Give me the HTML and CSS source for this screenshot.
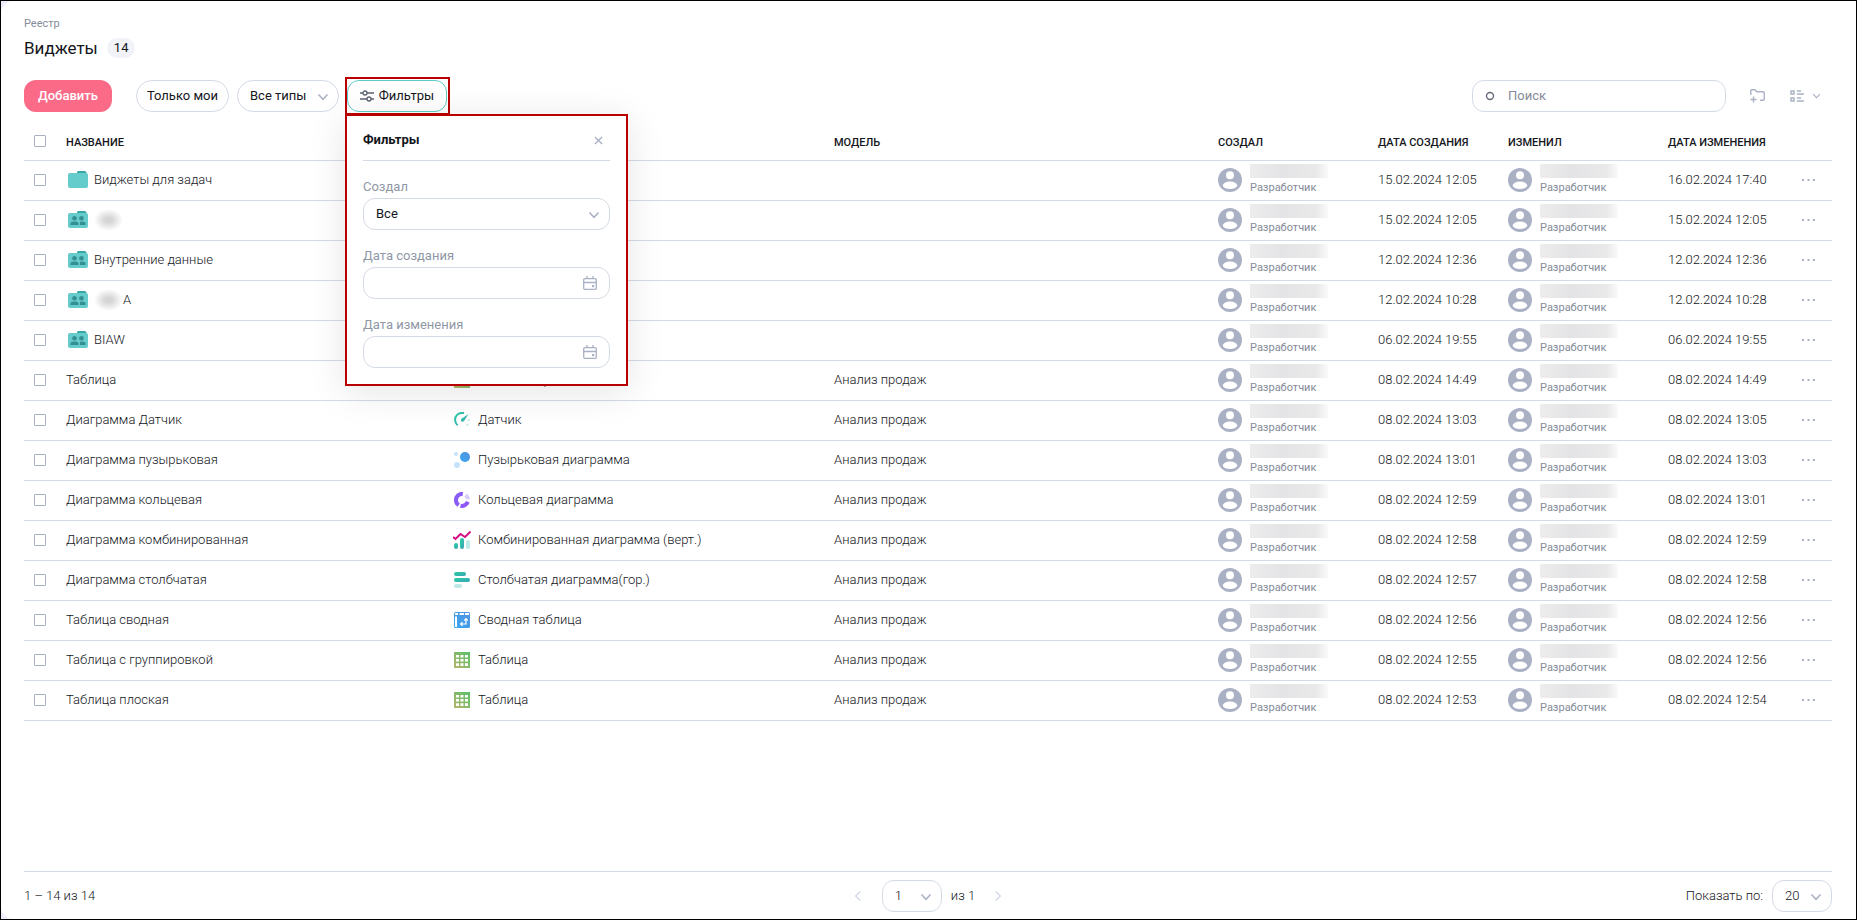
FILE: index.html
```html
<!DOCTYPE html>
<html lang="ru">
<head>
<meta charset="utf-8">
<title>Виджеты</title>
<link rel="stylesheet" href="styles.css">
</head>
<body>
<svg class="sprite" aria-hidden="true">
  <defs>
    <linearGradient id="g-teal" x1="0" y1="0" x2="1" y2="1"><stop offset="0" stop-color="#2ccfa3"/><stop offset="1" stop-color="#3aa3b8"/></linearGradient>
    <linearGradient id="g-blue" x1="0" y1="1" x2="1" y2="0"><stop offset="0" stop-color="#38a8f0"/><stop offset="1" stop-color="#5590e0"/></linearGradient>
    <linearGradient id="g-green" x1="0" y1="1" x2="1" y2="0"><stop offset="0" stop-color="#b9b36c"/><stop offset="1" stop-color="#55c268"/></linearGradient>
  </defs>
  <symbol id="chevron" viewBox="0 0 12 8"><path d="M1.500 1.500 6 6.300l4.500-4.800" fill="none" stroke="currentColor" stroke-width="1.500"/></symbol>
  <symbol id="folder" viewBox="0 0 20 18"><path d="M10 0h6.500a2 2 0 0 1 2 2v2H9V1z" fill="#3aa5a5"/><rect y="2" width="20" height="15" rx="2" fill="#65cccb"/></symbol>
  <symbol id="shared" viewBox="0 0 20 18"><path d="M10 0h6.500a2 2 0 0 1 2 2v2H9V1z" fill="#3aa5a5"/><rect y="2" width="20" height="15" rx="2" fill="#65cccb"/><g fill="#358f92"><circle cx="6.500" cy="7.200" r="2.300"/><circle cx="13.500" cy="7.200" r="2.300"/><path d="M2.500 14v-1.500q0-2 4-2t4 2V14zM12 14v-3.300q5.500-.7 5.500 1.800V14z"/></g></symbol>
  <symbol id="avatar" viewBox="0 0 24 24"><circle cx="12" cy="12" r="12" fill="#abb1c5"/><circle cx="12" cy="7.200" r="4" fill="#fff"/><ellipse cx="12" cy="17.300" rx="7.200" ry="3.700" fill="#fff"/></symbol>
  <symbol id="dots" viewBox="0 0 14 4"><path d="M0 1h2v2H0zM5.500 1h2v2h-2zM11 1h2v2h-2z" fill="currentColor"/></symbol>
  <symbol id="grid" viewBox="0 0 16 16"><path d="M0 0h16v16H0z" fill="url(#g-green)"/><path d="M2 3h3v2.500H2zm4.500 0h3v2.500h-3zM11 3h3v2.500h-3zM2 7h3v2.500H2zm4.500 0h3v2.500h-3zM11 7h3v2.500h-3zM2 11.200h3v2.800H2zm4.500 0h3v2.800h-3zm4.500 0h3v2.800h-3z" fill="#fff"/></symbol>
  <symbol id="gauge" viewBox="0 0 16 16"><path d="M10 1.100C4 0 .9 4 1.100 8c.1 2.300 1 4 2.500 5.200" fill="none" stroke="url(#g-teal)" stroke-width="2"/><path d="M14.500 2 10 9a1.700 1.700 0 0 1-2.800-2z" fill="url(#g-teal)"/><circle cx="15" cy="8" r="1" fill="#bfe9e6"/><circle cx="13.300" cy="13" r="1" fill="#bfe9e6"/></symbol>
  <symbol id="bubble" viewBox="0 0 16 16"><circle cx="11" cy="5" r="5" fill="url(#g-blue)"/><circle cx="2" cy="2" r="2" fill="#c5e2fb"/><circle cx="3" cy="13" r="3" fill="#c5e2fb"/></symbol>
  <symbol id="donut" viewBox="0 0 16 16"><g fill="none" stroke-width="4"><path d="M8.800 2C5 1.400 1.800 4.500 2 8.600c.1 1.900 1.200 3.500 2.700 4.500" stroke="#8a5cf6"/><path d="M6.500 13.800c2.900.7 6-.6 7.300-4" stroke="#9158f8"/><path d="M11.500 3.200a6 6 0 0 1 2.500 4" stroke="#d9cdfb"/></g></symbol>
  <symbol id="combo" viewBox="0 0 18 18"><path d="m0 6 2.500 2L7.500 3l4.500 3 5.500-5.500" fill="none" stroke="#d40e83" stroke-width="2"/><rect x="1" y="12" width="4" height="6" rx="2" fill="url(#g-teal)"/><rect x="7" y="7" width="4" height="11" rx="2" fill="url(#g-teal)"/><rect x="13" y="9" width="4" height="9" rx="2" fill="#bfe9e6"/></symbol>
  <symbol id="bars" viewBox="0 0 16 16"><rect width="12" height="4" rx="2" fill="url(#g-teal)"/><rect y="6" width="16" height="4" rx="2" fill="url(#g-teal)"/><rect y="12" width="8" height="4" rx="2" fill="#bfe9e6"/></symbol>
  <symbol id="pivot" viewBox="0 0 16 16"><rect width="16" height="16" rx="1.500" fill="url(#g-blue)"/><path d="M1 1h3v2H1zm4.500 0H10v2H5.500zM11 1h4v2h-4zM1 4.500h2V15H1z" fill="#fff"/><path d="M12 12V7m-1.700 1.500L12 6.600l1.700 1.900M12.600 12H7m1.500-1.700L6.600 12l1.900 1.700" fill="none" stroke="#fff" stroke-width="1.200"/></symbol>
  <symbol id="calendar" viewBox="0 0 14 14"><path d="M.7 3.700a1 1 0 0 1 1-1h10.600a1 1 0 0 1 1 1v8.600a1 1 0 0 1-1 1H1.700a1 1 0 0 1-1-1zM.7 6.500h12.600M4 0v2.500M10 0v2.500" fill="none" stroke="currentColor" stroke-width="1.300"/><path d="M9 9h2.200v2.200H9z" fill="currentColor"/></symbol>
</svg>
<main class="page">
  <header class="head">
    <a class="crumb" href="#">Реестр</a>
    <div class="title-row"><h1>Виджеты</h1><span class="count">14</span></div>
  </header>

  <div class="toolbar">
    <button class="btn btn-add">Добавить</button>
    <button class="btn">Только мои</button>
    <div class="select types">
      <select aria-label="Тип"><option>Все типы</option></select>
      <svg class="chev"><use href="#chevron"/></svg>
    </div>
    <div class="filter">
      <button class="btn btn-filter" aria-expanded="true">
        <svg class="sliders" viewBox="0 0 14 12"><g fill="none" stroke="#5b6270" stroke-width="1.300"><path d="M0 3h3M7 3h7M0 9h7M11 9h3"/><circle cx="5" cy="3" r="2"/><circle cx="9" cy="9" r="2"/></g></svg>
        Фильтры
      </button>
      <section class="panel" aria-label="Фильтры">
        <div class="panel-head">
          <h2>Фильтры</h2>
          <button class="close" aria-label="Закрыть"><svg viewBox="0 0 10 10"><path d="m1 1 8 8M9 1 1 9" fill="none" stroke="currentColor" stroke-width="1.500"/></svg></button>
        </div>
        <label for="author">Создал</label>
        <div class="select">
          <select id="author"><option>Все</option></select>
          <svg class="chev"><use href="#chevron"/></svg>
        </div>
        <label for="created">Дата создания</label>
        <div class="date"><input id="created" type="text"><svg><use href="#calendar"/></svg></div>
        <label for="changed">Дата изменения</label>
        <div class="date"><input id="changed" type="text"><svg><use href="#calendar"/></svg></div>
      </section>
    </div>
    <div class="tools">
      <div class="search">
        <svg viewBox="0 0 10 10"><circle cx="5" cy="5" r="3.500" fill="none" stroke="#656c79" stroke-width="1.400"/></svg>
        <input type="search" placeholder="Поиск" aria-label="Поиск">
      </div>
      <button class="icon-btn" aria-label="Новая папка"><svg class="newfolder" viewBox="0 0 15 14"><path d="M.8 6V1.700a1 1 0 0 1 1-1H5l1.700 2h6.500a1 1 0 0 1 1 1v6.600a1 1 0 0 1-1 1H10M3.500 7.500v6M.5 10.500h6" fill="none" stroke="currentColor" stroke-width="1.400"/></svg></button>
      <button class="icon-btn view" aria-label="Вид"><svg class="list" viewBox="0 0 15 12"><g fill="none" stroke="currentColor" stroke-width="1.400"><path d="M1 1h3v3H1zM1 8h3v3H1zM7 1h4M7 4h7M7 8h4M7 11h7"/></g></svg><svg class="chev-sm"><use href="#chevron"/></svg></button>
    </div>
  </div>

  <table class="grid">
    <colgroup><col class="c-check"><col><col><col><col class="c-user"><col class="c-date"><col class="c-user"><col class="c-date"><col class="c-more"></colgroup>
    <thead>
      <tr><th class="all"><input type="checkbox" aria-label="Выбрать все"></th><th>Название</th><th></th><th>Модель</th><th>Создал</th><th>Дата создания</th><th>Изменил</th><th>Дата изменения</th><th></th></tr>
    </thead>
    <tbody>
      <tr><td><input type="checkbox" aria-label="Виджеты для задач"></td><td><div class="name"><svg class="folder"><use href="#folder"/></svg>Виджеты для задач</div></td><td></td><td></td><td><div class="user"><svg><use href="#avatar"/></svg><div><i class="mask"></i><small>Разработчик</small></div></div></td><td class="dt">15.02.2024 12:05</td><td><div class="user"><svg><use href="#avatar"/></svg><div><i class="mask"></i><small>Разработчик</small></div></div></td><td class="dt">16.02.2024 17:40</td><td><button class="more" aria-label="Действия"><svg><use href="#dots"/></svg></button></td></tr>
      <tr><td><input type="checkbox" aria-label="Папка"></td><td><div class="name"><svg class="folder"><use href="#shared"/></svg><i class="smudge"></i></div></td><td></td><td></td><td><div class="user"><svg><use href="#avatar"/></svg><div><i class="mask"></i><small>Разработчик</small></div></div></td><td class="dt">15.02.2024 12:05</td><td><div class="user"><svg><use href="#avatar"/></svg><div><i class="mask"></i><small>Разработчик</small></div></div></td><td class="dt">15.02.2024 12:05</td><td><button class="more" aria-label="Действия"><svg><use href="#dots"/></svg></button></td></tr>
      <tr><td><input type="checkbox" aria-label="Внутренние данные"></td><td><div class="name"><svg class="folder"><use href="#shared"/></svg>Внутренние данные</div></td><td></td><td></td><td><div class="user"><svg><use href="#avatar"/></svg><div><i class="mask"></i><small>Разработчик</small></div></div></td><td class="dt">12.02.2024 12:36</td><td><div class="user"><svg><use href="#avatar"/></svg><div><i class="mask"></i><small>Разработчик</small></div></div></td><td class="dt">12.02.2024 12:36</td><td><button class="more" aria-label="Действия"><svg><use href="#dots"/></svg></button></td></tr>
      <tr><td><input type="checkbox" aria-label="Папка А"></td><td><div class="name"><svg class="folder"><use href="#shared"/></svg><span class="masked"><i class="smudge"></i>А</span></div></td><td></td><td></td><td><div class="user"><svg><use href="#avatar"/></svg><div><i class="mask"></i><small>Разработчик</small></div></div></td><td class="dt">12.02.2024 10:28</td><td><div class="user"><svg><use href="#avatar"/></svg><div><i class="mask"></i><small>Разработчик</small></div></div></td><td class="dt">12.02.2024 10:28</td><td><button class="more" aria-label="Действия"><svg><use href="#dots"/></svg></button></td></tr>
      <tr><td><input type="checkbox" aria-label="BIAW"></td><td><div class="name"><svg class="folder"><use href="#shared"/></svg>BIAW</div></td><td></td><td></td><td><div class="user"><svg><use href="#avatar"/></svg><div><i class="mask"></i><small>Разработчик</small></div></div></td><td class="dt">06.02.2024 19:55</td><td><div class="user"><svg><use href="#avatar"/></svg><div><i class="mask"></i><small>Разработчик</small></div></div></td><td class="dt">06.02.2024 19:55</td><td><button class="more" aria-label="Действия"><svg><use href="#dots"/></svg></button></td></tr>
      <tr><td><input type="checkbox" aria-label="Таблица"></td><td>Таблица</td><td><div class="type"><svg><use href="#grid"/></svg>Таблица сгр.</div></td><td>Анализ продаж</td><td><div class="user"><svg><use href="#avatar"/></svg><div><i class="mask"></i><small>Разработчик</small></div></div></td><td class="dt">08.02.2024 14:49</td><td><div class="user"><svg><use href="#avatar"/></svg><div><i class="mask"></i><small>Разработчик</small></div></div></td><td class="dt">08.02.2024 14:49</td><td><button class="more" aria-label="Действия"><svg><use href="#dots"/></svg></button></td></tr>
      <tr><td><input type="checkbox" aria-label="Диаграмма Датчик"></td><td>Диаграмма Датчик</td><td><div class="type"><svg><use href="#gauge"/></svg>Датчик</div></td><td>Анализ продаж</td><td><div class="user"><svg><use href="#avatar"/></svg><div><i class="mask"></i><small>Разработчик</small></div></div></td><td class="dt">08.02.2024 13:03</td><td><div class="user"><svg><use href="#avatar"/></svg><div><i class="mask"></i><small>Разработчик</small></div></div></td><td class="dt">08.02.2024 13:05</td><td><button class="more" aria-label="Действия"><svg><use href="#dots"/></svg></button></td></tr>
      <tr><td><input type="checkbox" aria-label="Диаграмма пузырьковая"></td><td>Диаграмма пузырьковая</td><td><div class="type"><svg><use href="#bubble"/></svg>Пузырьковая диаграмма</div></td><td>Анализ продаж</td><td><div class="user"><svg><use href="#avatar"/></svg><div><i class="mask"></i><small>Разработчик</small></div></div></td><td class="dt">08.02.2024 13:01</td><td><div class="user"><svg><use href="#avatar"/></svg><div><i class="mask"></i><small>Разработчик</small></div></div></td><td class="dt">08.02.2024 13:03</td><td><button class="more" aria-label="Действия"><svg><use href="#dots"/></svg></button></td></tr>
      <tr><td><input type="checkbox" aria-label="Диаграмма кольцевая"></td><td>Диаграмма кольцевая</td><td><div class="type"><svg><use href="#donut"/></svg>Кольцевая диаграмма</div></td><td>Анализ продаж</td><td><div class="user"><svg><use href="#avatar"/></svg><div><i class="mask"></i><small>Разработчик</small></div></div></td><td class="dt">08.02.2024 12:59</td><td><div class="user"><svg><use href="#avatar"/></svg><div><i class="mask"></i><small>Разработчик</small></div></div></td><td class="dt">08.02.2024 13:01</td><td><button class="more" aria-label="Действия"><svg><use href="#dots"/></svg></button></td></tr>
      <tr><td><input type="checkbox" aria-label="Диаграмма комбинированная"></td><td>Диаграмма комбинированная</td><td><div class="type"><svg class="wide"><use href="#combo"/></svg>Комбинированная диаграмма (верт.)</div></td><td>Анализ продаж</td><td><div class="user"><svg><use href="#avatar"/></svg><div><i class="mask"></i><small>Разработчик</small></div></div></td><td class="dt">08.02.2024 12:58</td><td><div class="user"><svg><use href="#avatar"/></svg><div><i class="mask"></i><small>Разработчик</small></div></div></td><td class="dt">08.02.2024 12:59</td><td><button class="more" aria-label="Действия"><svg><use href="#dots"/></svg></button></td></tr>
      <tr><td><input type="checkbox" aria-label="Диаграмма столбчатая"></td><td>Диаграмма столбчатая</td><td><div class="type"><svg><use href="#bars"/></svg>Столбчатая диаграмма(гор.)</div></td><td>Анализ продаж</td><td><div class="user"><svg><use href="#avatar"/></svg><div><i class="mask"></i><small>Разработчик</small></div></div></td><td class="dt">08.02.2024 12:57</td><td><div class="user"><svg><use href="#avatar"/></svg><div><i class="mask"></i><small>Разработчик</small></div></div></td><td class="dt">08.02.2024 12:58</td><td><button class="more" aria-label="Действия"><svg><use href="#dots"/></svg></button></td></tr>
      <tr><td><input type="checkbox" aria-label="Таблица сводная"></td><td>Таблица сводная</td><td><div class="type"><svg><use href="#pivot"/></svg>Сводная таблица</div></td><td>Анализ продаж</td><td><div class="user"><svg><use href="#avatar"/></svg><div><i class="mask"></i><small>Разработчик</small></div></div></td><td class="dt">08.02.2024 12:56</td><td><div class="user"><svg><use href="#avatar"/></svg><div><i class="mask"></i><small>Разработчик</small></div></div></td><td class="dt">08.02.2024 12:56</td><td><button class="more" aria-label="Действия"><svg><use href="#dots"/></svg></button></td></tr>
      <tr><td><input type="checkbox" aria-label="Таблица с группировкой"></td><td>Таблица с группировкой</td><td><div class="type"><svg><use href="#grid"/></svg>Таблица</div></td><td>Анализ продаж</td><td><div class="user"><svg><use href="#avatar"/></svg><div><i class="mask"></i><small>Разработчик</small></div></div></td><td class="dt">08.02.2024 12:55</td><td><div class="user"><svg><use href="#avatar"/></svg><div><i class="mask"></i><small>Разработчик</small></div></div></td><td class="dt">08.02.2024 12:56</td><td><button class="more" aria-label="Действия"><svg><use href="#dots"/></svg></button></td></tr>
      <tr><td><input type="checkbox" aria-label="Таблица плоская"></td><td>Таблица плоская</td><td><div class="type"><svg><use href="#grid"/></svg>Таблица</div></td><td>Анализ продаж</td><td><div class="user"><svg><use href="#avatar"/></svg><div><i class="mask"></i><small>Разработчик</small></div></div></td><td class="dt">08.02.2024 12:53</td><td><div class="user"><svg><use href="#avatar"/></svg><div><i class="mask"></i><small>Разработчик</small></div></div></td><td class="dt">08.02.2024 12:54</td><td><button class="more" aria-label="Действия"><svg><use href="#dots"/></svg></button></td></tr>
    </tbody>
  </table>

  <footer class="foot">
    <span>1 – 14 из 14</span>
    <nav class="pager" aria-label="Страницы">
      <button class="arrow prev" aria-label="Назад"><svg><use href="#chevron"/></svg></button>
      <div class="select small"><select id="pageno" aria-label="Страница"><option>1</option></select><svg class="chev"><use href="#chevron"/></svg></div>
      <span>из 1</span>
      <button class="arrow next" aria-label="Вперёд"><svg><use href="#chevron"/></svg></button>
    </nav>
    <div class="per-page"><label for="size">Показать по:</label><div class="select small"><select id="size"><option>20</option></select><svg class="chev"><use href="#chevron"/></svg></div></div>
  </footer>
</main>
</body>
</html>
```
FILE: styles.css
```css
* { box-sizing: border-box; }

body {
  margin: 0;
  min-height: 100vh;
  display: flex;
  border: 1px solid #000;
  background: #efeaf8;
  font: 300 13px/16px Roboto, "Liberation Sans", sans-serif;
  color: #14161c;
}

button, input, select { font: inherit; color: inherit; margin: 0; }
button { cursor: pointer; }
svg { display: block; flex: none; }
.sprite { position: absolute; width: 0; height: 0; }

.page {
  flex: 1;
  min-width: 0;
  display: flex;
  flex-direction: column;
  padding: 0 24px 0 23px;
  background: #fff;
  border-radius: 12px 0 0 12px;
}

.head { padding-top: 15px; font-weight: 400; }
.crumb { display: block; font-size: 11px; line-height: 16px; color: #858b99; text-decoration: none; }
.title-row { display: flex; align-items: center; gap: 9px; height: 20px; margin-top: 6px; }
h1 { margin: 0; font-size: 17px; line-height: 20px; font-weight: 400; }
.count { padding: 2px 7px; border-radius: 10px; background: #f1f3f8; font-size: 13px; }

.toolbar { display: flex; align-items: center; gap: 8px; margin-top: 22px; font-weight: 400; }
.btn { height: 32px; padding: 0 10px; border: 1px solid #d5dbe5; border-radius: 16px; background: #fff; white-space: nowrap; }
.btn-add { margin-right: 16px; padding: 0 14px; border: 0; border-radius: 12px; background: #fb6b88; color: #fff; font-weight: 500; }
.select { position: relative; }
.select select { appearance: none; display: block; width: 100%; height: 32px; padding: 0 30px 0 12px; border: 1px solid #d5dbe5; border-radius: 12px; background: #fff; }
.chev { position: absolute; right: 10px; top: 13px; width: 12px; height: 8px; color: #abb1c5; pointer-events: none; }
.types { width: 102px; }
.types select { border-radius: 16px; }

.filter { position: relative; }
.filter::after { content: ""; position: absolute; inset: -3px -3px -3px -2px; border: 2px solid #b90000; pointer-events: none; }
.btn-filter { display: flex; align-items: center; justify-content: center; gap: 5px; width: 100px; border-color: #63c9c8; border-radius: 12px; }
.sliders { width: 14px; height: 12px; }

.panel {
  position: absolute;
  z-index: 2;
  top: 34px;
  left: -2px;
  width: 283px;
  padding: 16px;
  border: 2px solid #b90000;
  background: #fff;
  box-shadow: 0 6px 36px rgba(0, 0, 0, .11);
}
.panel-head { display: flex; align-items: center; justify-content: space-between; height: 29px; padding-bottom: 12px; border-bottom: 1px solid #d5dbe5; }
h2 { margin: 0; font-size: 13px; line-height: 16px; font-weight: 700; }
.close { padding: 4px 7px; border: 0; background: none; color: #abb1c5; }
.close svg { width: 9px; height: 9px; }
.panel label { display: block; margin: 18px 0 3px; color: #8f97a6; }
.date { position: relative; }
.date input { display: block; width: 100%; height: 32px; padding: 0 36px 0 12px; border: 1px solid #d5dbe5; border-radius: 12px; background: #fff; }
.date svg { position: absolute; right: 13px; top: 9px; width: 14px; height: 14px; color: #abb1c5; }

.tools { display: flex; align-items: center; margin-left: auto; }
.search { display: flex; align-items: center; gap: 13px; width: 254px; height: 32px; margin-right: 24px; padding: 0 12px; border: 1px solid #d5dbe5; border-radius: 12px; }
.search svg { width: 10px; height: 10px; }
.search input { flex: 1; min-width: 0; padding: 0; border: 0; outline: 0; background: none; }
.search input::placeholder { color: #858b99; opacity: 1; }
.icon-btn { display: flex; align-items: center; gap: 7px; padding: 0; border: 0; background: none; color: #abb1c5; }
.newfolder { width: 15px; height: 14px; }
.view { margin: 0 11px 0 25px; }
.list { width: 15px; height: 12px; }
.chev-sm { width: 9px; height: 6px; }

.grid { width: 100%; margin-top: 10px; table-layout: fixed; border-collapse: collapse; }
.c-check { width: 42px; }
.c-user { width: 160px; }
.c-date { width: 130px; }
.c-more { width: 34px; }
th, td { height: 40px; padding: 0; border-bottom: 1px solid #d5dbe5; text-align: left; white-space: nowrap; }
th { height: 38px; padding-top: 4px; font-size: 11px; line-height: 16px; font-weight: 500; text-transform: uppercase; }
.all { padding-top: 0; }
.grid input { appearance: none; display: block; width: 12px; height: 12px; margin-left: 10px; border: 1px solid #abb1c5; border-radius: 1px; background: #fff; }
.name { display: flex; align-items: center; gap: 6px; padding-left: 2px; }
.folder { width: 20px; height: 18px; }
.masked { display: flex; align-items: center; }
.smudge { width: 29px; height: 22px; background: radial-gradient(closest-side, #d4d4d5 20%, #e9e9ea 60%, #fff); }
.type { display: flex; align-items: center; gap: 8px; padding-left: 4px; }
.type svg { width: 16px; height: 16px; }
.type .wide { width: 18px; height: 18px; margin: 0 -1px; }
.user { display: flex; align-items: center; gap: 8px; }
.user > svg { width: 24px; height: 24px; }
.user small { display: block; font-size: 11px; line-height: 16px; font-weight: 400; color: #858b99; }
.mask { display: block; width: 78px; height: 14px; margin-bottom: 2px; background: linear-gradient(90deg, #ededee, #e4e4e6 40%, #e9e9ea 85%, #fafafa); }
.more { display: block; padding: 8px 4px; border: 0; background: none; color: #abb1c5; }
.more svg { width: 14px; height: 4px; }

.foot { display: grid; grid-template-columns: 1fr auto 1fr; align-items: center; height: 48px; margin-top: auto; border-top: 1px solid #d5dbe5; }
.pager, .per-page { display: flex; align-items: center; gap: 9px; }
.per-page { justify-content: flex-end; }
.small { width: 60px; }
.arrow { display: flex; align-items: center; width: 12px; height: 16px; padding: 0; border: 0; background: none; color: #d5dbe5; }
.arrow svg { width: 12px; height: 8px; }
.prev { margin-right: 9px; }
.next { margin-left: 8px; }
.prev svg { transform: rotate(90deg); }
.next svg { transform: rotate(-90deg); }
```
